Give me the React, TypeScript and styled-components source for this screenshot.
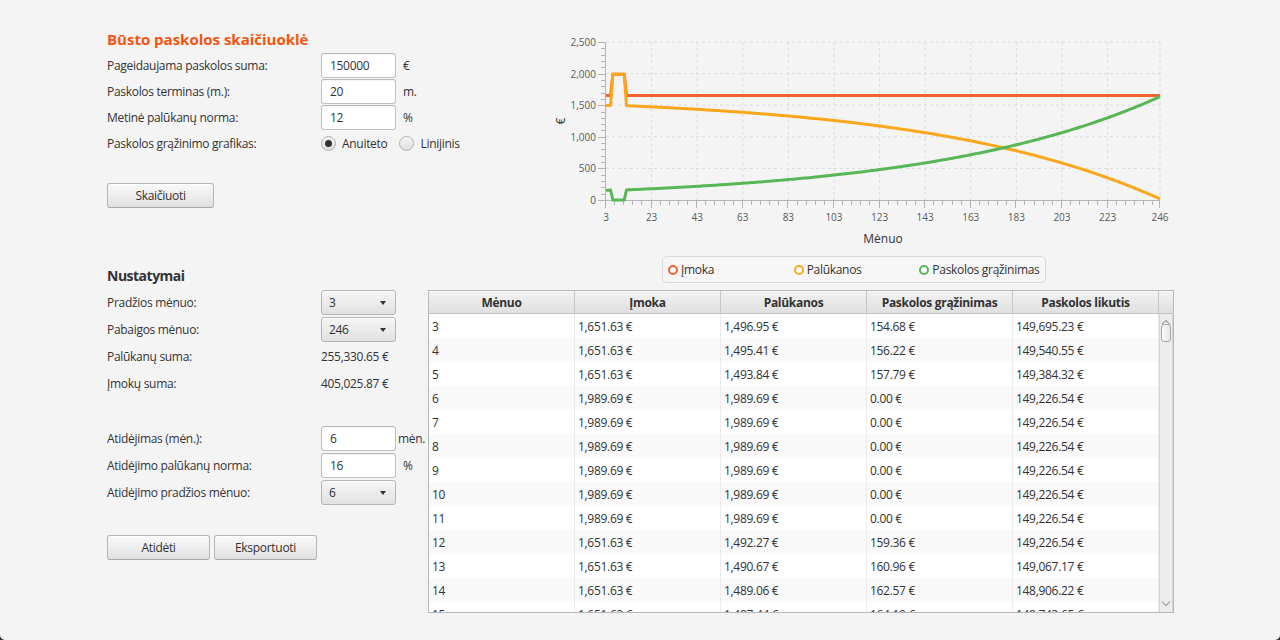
import React from 'react';
import styled, { createGlobalStyle } from 'styled-components';

const Global = createGlobalStyle`
  html, body { margin: 0; padding: 0; background: #2a2a2a; }
  body {
    font-family: "Open Sans", "Noto Sans", "DejaVu Sans", sans-serif;
    font-size: 12px;
    letter-spacing: -0.3px;
    color: #333;
  }
  * { box-sizing: border-box; }
`;

const Window = styled.div`
  width: 1280px;
  height: 640px;
  background: #f4f4f4;
  border-radius: 0 0 5px 5px;
  overflow: hidden;
  display: flex;
  padding: 29px 0 0 107px;
`;

const LeftCol = styled.div`
  width: 321px;
  flex-shrink: 0;
  display: flex;
  flex-direction: column;
`;

const RightCol = styled.div`
  width: 746px;
  flex-shrink: 0;
  display: flex;
  flex-direction: column;
`;

const Title = styled.div`
  height: 20px;
  line-height: 20px;
  font-size: 15px;
  font-weight: 700;
  letter-spacing: 0;
  color: #f4550f;
  margin-bottom: 4px;
  white-space: nowrap;
`;

const SectionTitle = styled.div`
  height: 20px;
  line-height: 20px;
  font-size: 14px;
  font-weight: 700;
  letter-spacing: -0.5px;
  color: #333;
  margin-top: 58px;
  margin-bottom: 4px;
`;

const Rows = styled.div<{ $gap: number }>`
  display: flex;
  flex-direction: column;
  gap: ${p => p.$gap}px;
`;

const Row = styled.div`
  display: grid;
  grid-template-columns: 214px 75px auto;
  align-items: center;
  height: 25px;
  white-space: nowrap;
`;

const Label = styled.span`
  color: #333;
`;

const Value = styled.span`
  color: #333;
`;

const TextField = styled.div`
  height: 25px;
  background: #fff;
  border: 1px solid #c2c2c2;
  border-top-color: #b8b8b8;
  border-radius: 3px;
  box-shadow: inset 0 1px 1px rgba(0, 0, 0, 0.05);
  padding-left: 8px;
  display: flex;
  align-items: center;
  color: #333;
`;

const Unit = styled.span<{ $shift?: number }>`
  margin-left: ${p => p.$shift ?? 7}px;
`;

const Combo = styled.div`
  height: 25px;
  border: 1px solid #b5b5b5;
  border-radius: 3px;
  background: linear-gradient(#f6f6f6, #e1e1e1);
  box-shadow: inset 0 1px 0 #fcfcfc;
  padding: 0 9px 0 7px;
  display: flex;
  align-items: center;
  justify-content: space-between;
  color: #333;
`;

const Arrow = styled.span`
  width: 0;
  height: 0;
  border-left: 3.5px solid transparent;
  border-right: 3.5px solid transparent;
  border-top: 4px solid #333;
`;

const RadioGroup = styled.div`
  grid-column: 2 / 4;
  display: flex;
  align-items: center;
`;

const RadioItem = styled.label`
  display: flex;
  align-items: center;
  gap: 6px;
  margin-right: 12px;
`;

const RadioCircle = styled.span<{ $on?: boolean }>`
  width: 15px;
  height: 15px;
  border-radius: 50%;
  border: 1px solid #b0b0b0;
  background: linear-gradient(#f8f8f8, #dedede);
  display: flex;
  align-items: center;
  justify-content: center;
  &::after {
    content: '';
    display: ${p => (p.$on ? 'block' : 'none')};
    width: 7px;
    height: 7px;
    border-radius: 50%;
    background: #333;
  }
`;

const Button = styled.div<{ $w: number }>`
  width: ${p => p.$w}px;
  height: 25px;
  border: 1px solid #b7b7b7;
  border-bottom-color: #a8a8a8;
  border-radius: 3px;
  background: linear-gradient(#fafafa, #e0e0e0);
  box-shadow: inset 0 1px 0 #fff;
  display: flex;
  align-items: center;
  justify-content: center;
  color: #333;
`;

const ButtonRow = styled.div<{ $top: number }>`
  display: flex;
  gap: 4px;
  margin-top: ${p => p.$top}px;
`;

const Spacer = styled.div<{ $h: number }>`
  height: ${p => p.$h}px;
`;

const ChartSvg = styled.svg`
  display: block;
  margin-left: 122px;
  letter-spacing: 0;
  font-family: "Open Sans", "Noto Sans", sans-serif;
`;

const Legend = styled.div`
  margin-top: 4px;
  margin-left: 234px;
  width: 384px;
  height: 27px;
  border: 1px solid #dadada;
  border-radius: 5px;
  background: #f6f6f6;
  display: flex;
  align-items: center;
  padding-left: 5px;
`;

const LegendItem = styled.div`
  width: 126px;
  display: flex;
  align-items: center;
  gap: 3px;
  white-space: nowrap;
`;

const LegendDot = styled.span<{ $c: string }>`
  width: 10px;
  height: 10px;
  border-radius: 50%;
  border: 2px solid ${p => p.$c};
  background: #fff;
`;

const Table = styled.div`
  margin-top: 7px;
  width: 746px;
  height: 323px;
  border: 1px solid #b8b8b8;
  background: #fff;
  display: flex;
  flex-direction: column;
  overflow: hidden;
`;

const HeadRow = styled.div`
  display: grid;
  grid-template-columns: repeat(5, 146px) 14px;
  height: 23px;
  border-bottom: 1px solid #c2c2c2;
  flex-shrink: 0;
`;

const HeadCell = styled.div`
  background: linear-gradient(#f2f2f2, #e0e0e0);
  border-right: 1px solid #c6c6c6;
  box-shadow: inset 0 1px 0 #f9f9f9;
  font-weight: 700;
  display: flex;
  align-items: center;
  justify-content: center;
  color: #333;
  &:last-child { border-right: none; }
`;

const Body = styled.div`
  display: flex;
  flex: 1;
  overflow: hidden;
`;

const RowsArea = styled.div`
  width: 730px;
  overflow: hidden;
`;

const BodyRow = styled.div<{ $odd: boolean }>`
  display: grid;
  grid-template-columns: repeat(5, 146px);
  height: 24px;
  background: ${p => (p.$odd ? '#f9f9f9' : '#fff')};
`;

const Cell = styled.div`
  border-right: 1px solid #ececec;
  padding-left: 3px;
  display: flex;
  align-items: center;
  white-space: nowrap;
  color: #333;
`;

const ScrollBar = styled.div`
  width: 14px;
  background: #ececec;
  border-left: 1px solid #d4d4d4;
  border-right: 1px solid #d4d4d4;
  display: flex;
  flex-direction: column;
  align-items: center;
  position: relative;
`;

const ScrollArrow = styled.span<{ $up?: boolean }>`
  margin-top: ${p => (p.$up ? '5px' : 'auto')};
  margin-bottom: ${p => (p.$up ? '0' : '5px')};
  width: 6px;
  height: 6px;
  border-left: 1px solid #9a9a9a;
  border-top: 1px solid #9a9a9a;
  transform: ${p => (p.$up ? 'translateY(2px) rotate(45deg)' : 'translateY(-2px) rotate(225deg)')};
`;

const Thumb = styled.span`
  position: absolute;
  top: 10px;
  left: 1px;
  width: 10px;
  height: 18px;
  border-radius: 3px;
  border: 1px solid #a9a9a9;
  background: linear-gradient(90deg, #fafafa, #e6e6e6);
`;

// ---- data ----
const C_IMOKA = '#f3622d';
const C_PAL = '#fba71b';
const C_GRAZ = '#57b757';

function buildSeries() {
  let B = 150000;
  const r = 0.01;
  const pay = Math.round(((B * r) / (1 - Math.pow(1 + r, -240))) * 100) / 100;
  const out: { m: number; im: number; pal: number; gr: number }[] = [];
  for (let m = 1; m <= 246; m++) {
    if (m >= 6 && m <= 11) {
      const i = (B * 0.16) / 12;
      out.push({ m, im: i, pal: i, gr: 0 });
    } else {
      const i = B * r;
      const p = pay - i;
      B -= p;
      out.push({ m, im: pay, pal: i, gr: p });
    }
  }
  return out.filter(d => d.m >= 3);
}

const X0 = 606, X1 = 1160, Y0 = 200, Y1 = 42;
const xs = (m: number) => X0 + ((m - 3) * (X1 - X0)) / 243;
const ys = (v: number) => Y0 - (v * (Y0 - Y1)) / 2500;

const Chart: React.FC = () => {
  const data = buildSeries();
  const pts = (k: 'im' | 'pal' | 'gr') => data.map(d => `${xs(d.m).toFixed(2)},${ys(d[k]).toFixed(2)}`).join(' ');
  const xMajor = [3, 23, 43, 63, 83, 103, 123, 143, 163, 183, 203, 223, 246];
  const xMinor: number[] = [];
  for (let m = 3; m <= 246; m += 4) if (!xMajor.includes(m)) xMinor.push(m);
  const yMajor = [0, 500, 1000, 1500, 2000, 2500];
  const yMinor: number[] = [];
  for (let v = 0; v <= 2500; v += 100) if (v % 500 !== 0) yMinor.push(v);
  const grid = '#dcdcdc';
  const axis = '#b4b4b4';
  const fmt = (v: number) => v.toLocaleString('en-US');
  return (
    <ChartSvg width={625} height={223} viewBox="550 29 625 223">
      {yMajor.filter(v => v > 0).map(v => (
        <line key={'hg' + v} x1={X0} x2={X1} y1={ys(v)} y2={ys(v)} stroke={grid} strokeDasharray="3 3" />
      ))}
      {xMajor.filter(m => m > 3).map(m => (
        <line key={'vg' + m} x1={xs(m)} x2={xs(m)} y1={Y1} y2={Y0} stroke={grid} strokeDasharray="3 3" />
      ))}
      <line x1={X0 - 0.5} x2={X0 - 0.5} y1={Y1} y2={Y0 + 0.5} stroke={axis} />
      <line x1={X0} x2={X1} y1={Y0 + 0.5} y2={Y0 + 0.5} stroke={axis} />
      {yMajor.map(v => (
        <line key={'yt' + v} x1={X0 - 8} x2={X0} y1={Math.round(ys(v)) + 0.5} y2={Math.round(ys(v)) + 0.5} stroke={axis} />
      ))}
      {yMinor.map(v => (
        <line key={'ym' + v} x1={X0 - 5} x2={X0} y1={Math.round(ys(v)) + 0.5} y2={Math.round(ys(v)) + 0.5} stroke={axis} />
      ))}
      {xMajor.map(m => (
        <line key={'xt' + m} x1={Math.round(xs(m)) - 0.5} x2={Math.round(xs(m)) - 0.5} y1={Y0} y2={Y0 + 8} stroke={axis} />
      ))}
      {xMinor.map(m => (
        <line key={'xm' + m} x1={Math.round(xs(m)) - 0.5} x2={Math.round(xs(m)) - 0.5} y1={Y0} y2={Y0 + 5} stroke={axis} />
      ))}
      {yMajor.map(v => (
        <text key={'yl' + v} x={596} y={ys(v)} fontSize={10} fill="#5a5a5a" textAnchor="end" dominantBaseline="central">
          {fmt(v)}
        </text>
      ))}
      {xMajor.map(m => (
        <text key={'xl' + m} x={xs(m)} y={217} fontSize={10} fill="#5a5a5a" textAnchor="middle" dominantBaseline="central">
          {m}
        </text>
      ))}
      <text x={883} y={238} fontSize={12} fill="#333" textAnchor="middle" dominantBaseline="central">Mėnuo</text>
      <text x={560} y={121} fontSize={12} fill="#333" textAnchor="middle" dominantBaseline="central" transform="rotate(-90 560 121)">€</text>
      <polyline points={pts('im')} fill="none" stroke={C_IMOKA} strokeWidth={3} strokeLinejoin="round" />
      <polyline points={pts('pal')} fill="none" stroke={C_PAL} strokeWidth={3} strokeLinejoin="round" />
      <polyline points={pts('gr')} fill="none" stroke={C_GRAZ} strokeWidth={3} strokeLinejoin="round" />
    </ChartSvg>
  );
};

const tableRows: string[][] = [
  ['3', '1,651.63 €', '1,496.95 €', '154.68 €', '149,695.23 €'],
  ['4', '1,651.63 €', '1,495.41 €', '156.22 €', '149,540.55 €'],
  ['5', '1,651.63 €', '1,493.84 €', '157.79 €', '149,384.32 €'],
  ...[6, 7, 8, 9, 10, 11].map(m => [String(m), '1,989.69 €', '1,989.69 €', '0.00 €', '149,226.54 €']),
  ['12', '1,651.63 €', '1,492.27 €', '159.36 €', '149,226.54 €'],
  ['13', '1,651.63 €', '1,490.67 €', '160.96 €', '149,067.17 €'],
  ['14', '1,651.63 €', '1,489.06 €', '162.57 €', '148,906.22 €'],
  ['15', '1,651.63 €', '1,487.44 €', '164.19 €', '148,743.65 €'],
];

const headers = ['Mėnuo', 'Įmoka', 'Palūkanos', 'Paskolos grąžinimas', 'Paskolos likutis'];

export default function App() {
  return (
    <>
      <Global />
      <Window>
        <LeftCol>
          <Title>Būsto paskolos skaičiuoklė</Title>
          <Rows $gap={1}>
            <Row>
              <Label>Pageidaujama paskolos suma:</Label>
              <TextField>150000</TextField>
              <Unit>€</Unit>
            </Row>
            <Row>
              <Label>Paskolos terminas (m.):</Label>
              <TextField>20</TextField>
              <Unit>m.</Unit>
            </Row>
            <Row>
              <Label>Metinė palūkanų norma:</Label>
              <TextField>12</TextField>
              <Unit>%</Unit>
            </Row>
            <Row>
              <Label>Paskolos grąžinimo grafikas:</Label>
              <RadioGroup>
                <RadioItem>
                  <RadioCircle $on />
                  Anuiteto
                </RadioItem>
                <RadioItem>
                  <RadioCircle />
                  Linijinis
                </RadioItem>
              </RadioGroup>
            </Row>
          </Rows>
          <ButtonRow $top={27}>
            <Button $w={107}>Skaičiuoti</Button>
          </ButtonRow>

          <SectionTitle>Nustatymai</SectionTitle>
          <Rows $gap={2}>
            <Row>
              <Label>Pradžios mėnuo:</Label>
              <Combo>3<Arrow /></Combo>
            </Row>
            <Row>
              <Label>Pabaigos mėnuo:</Label>
              <Combo>246<Arrow /></Combo>
            </Row>
            <Row>
              <Label>Palūkanų suma:</Label>
              <Value>255,330.65 €</Value>
            </Row>
            <Row>
              <Label>Įmokų suma:</Label>
              <Value>405,025.87 €</Value>
            </Row>
          </Rows>
          <Spacer $h={30} />
          <Rows $gap={2}>
            <Row>
              <Label>Atidėjimas (mėn.):</Label>
              <TextField>6</TextField>
              <Unit $shift={2}>mėn.</Unit>
            </Row>
            <Row>
              <Label>Atidėjimo palūkanų norma:</Label>
              <TextField>16</TextField>
              <Unit>%</Unit>
            </Row>
            <Row>
              <Label>Atidėjimo pradžios mėnuo:</Label>
              <Combo>6<Arrow /></Combo>
            </Row>
          </Rows>
          <ButtonRow $top={30}>
            <Button $w={103}>Atidėti</Button>
            <Button $w={103}>Eksportuoti</Button>
          </ButtonRow>
        </LeftCol>

        <RightCol>
          <Chart />
          <Legend>
            <LegendItem><LegendDot $c={C_IMOKA} />Įmoka</LegendItem>
            <LegendItem><LegendDot $c={C_PAL} />Palūkanos</LegendItem>
            <LegendItem><LegendDot $c={C_GRAZ} />Paskolos grąžinimas</LegendItem>
          </Legend>
          <Table>
            <HeadRow>
              {headers.map(h => <HeadCell key={h}>{h}</HeadCell>)}
              <HeadCell />
            </HeadRow>
            <Body>
              <RowsArea>
                {tableRows.map((r, i) => (
                  <BodyRow key={i} $odd={i % 2 === 1}>
                    {r.map((c, j) => <Cell key={j}>{c}</Cell>)}
                  </BodyRow>
                ))}
              </RowsArea>
              <ScrollBar>
                <ScrollArrow $up />
                <Thumb />
                <ScrollArrow />
              </ScrollBar>
            </Body>
          </Table>
        </RightCol>
      </Window>
    </>
  );
}
